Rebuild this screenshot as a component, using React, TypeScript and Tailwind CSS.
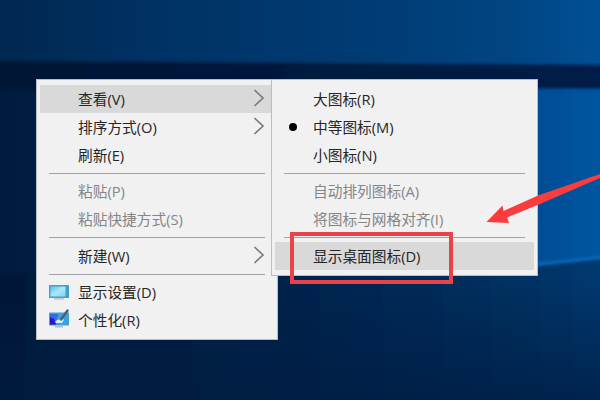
import type { ReactNode } from 'react'

interface MenuItem {
  label?: string
  separator?: boolean
  submenu?: boolean
  disabled?: boolean
  active?: boolean
  checked?: boolean
  icon?: ReactNode
}

function DisplayIcon() {
  return (
    <svg width="20" height="17" viewBox="0 0 20 17" fill="none">
      <defs>
        <linearGradient id="screen" x1="0" y1="0" x2="1" y2="1">
          <stop offset="0" stopColor="#62bce2" />
          <stop offset="0.5" stopColor="#a8e8fa" />
          <stop offset="1" stopColor="#7fd2f0" />
        </linearGradient>
      </defs>
      <rect x="0" y="1" width="20" height="13" rx="0.5" fill="#459fcb" />
      <rect x="1.5" y="2.5" width="15" height="10" fill="url(#screen)" />
      <path d="M5 15h10" stroke="#b4c6d0" strokeWidth="1.4" />
    </svg>
  )
}

function PersonalizeIcon() {
  return (
    <svg className="mb-1" width="20" height="20" viewBox="0 0 20 20" fill="none">
      <rect x="0" y="3.5" width="20" height="13" rx="0.5" fill="#3f9fdc" />
      <path d="M1 5h8l-2 10.5H1z" fill="#2c6fdd" />
      <path d="M1 8l4 2 2 5.5H1z" fill="#3310cf" />
      <path d="M6 13c2-2.5 5-3 9-2.5l-2 3.5H7z" fill="#d5f2fc" />
      <path d="M18.5 1.5L12 10.5" stroke="#47616f" strokeWidth="2.4" strokeLinecap="round" />
      <path d="M6 17.8h8" stroke="#a9b4d6" strokeWidth="1.4" />
    </svg>
  )
}

const mainItems: MenuItem[] = [
  { label: '查看(V)', submenu: true, active: true },
  { label: '排序方式(O)', submenu: true },
  { label: '刷新(E)' },
  { separator: true },
  { label: '粘贴(P)', disabled: true },
  { label: '粘贴快捷方式(S)', disabled: true },
  { separator: true },
  { label: '新建(W)', submenu: true },
  { separator: true },
  { label: '显示设置(D)', icon: <DisplayIcon /> },
  { label: '个性化(R)', icon: <PersonalizeIcon /> },
]

const viewItems: MenuItem[] = [
  { label: '大图标(R)' },
  { label: '中等图标(M)', checked: true },
  { label: '小图标(N)' },
  { separator: true },
  { label: '自动排列图标(A)', disabled: true },
  { label: '将图标与网格对齐(I)', disabled: true },
  { separator: true },
  { label: '显示桌面图标(D)', active: true },
]

function MenuRow({ item }: { item: MenuItem }) {
  return (
    <li
      className={`flex h-7 items-center pr-[9px] ${item.active ? 'bg-[#d9d9d9]' : ''} ${
        item.disabled ? 'text-[#858585]' : 'text-[#262626]'
      }`}
    >
      <span className="flex w-[38px] shrink-0 items-center pl-[9px]">
        {item.icon}
        {item.checked && <span className="ml-[5px] size-2 rounded-full bg-black" />}
      </span>
      <span className="flex-1 pb-px whitespace-nowrap">{item.label}</span>
      {item.submenu && (
        <svg className="mb-0.5" width="12" height="18" viewBox="0 0 12 18" fill="none">
          <path d="M1.5 1l8.5 8-8.5 8" stroke="#7c7c7c" strokeWidth="1.7" />
        </svg>
      )}
    </li>
  )
}

function Menu({ items, className }: { items: MenuItem[]; className: string }) {
  return (
    <ul
      className={`absolute border border-[#b9bec4] bg-[#f1f1f1] px-[3px] pt-[5px] text-[14.7px] leading-[26px] ${className}`}
    >
      {items.map((item, index) =>
        item.separator ? (
          <li key={index} className="flex h-[8.5px] items-center pr-[9px] pl-[9px]">
            <span className="h-px w-full bg-[#a3a3a3]" />
          </li>
        ) : (
          <MenuRow key={index} item={item} />
        )
      )}
    </ul>
  )
}

function Wallpaper() {
  return (
    <svg className="absolute inset-0" width="600" height="400" viewBox="0 0 600 400">
      <defs>
        <linearGradient id="base" x1="0" y1="0" x2="1" y2="0">
          <stop offset="0" stopColor="#001b3f" />
          <stop offset="0.5" stopColor="#002a59" />
          <stop offset="1" stopColor="#003a78" />
        </linearGradient>
        <linearGradient id="top" x1="0" y1="0" x2="1" y2="0">
          <stop offset="0" stopColor="#002850" />
          <stop offset="0.25" stopColor="#003264" />
          <stop offset="0.6" stopColor="#003b73" />
          <stop offset="0.85" stopColor="#004582" />
          <stop offset="1" stopColor="#005096" />
        </linearGradient>
        <linearGradient id="bar" x1="0" y1="0" x2="1" y2="0">
          <stop offset="0" stopColor="#001433" />
          <stop offset="1" stopColor="#001f48" />
        </linearGradient>
        <linearGradient id="pane" x1="0" y1="0" x2="1" y2="0">
          <stop offset="0" stopColor="#004a8e" />
          <stop offset="1" stopColor="#0057a6" />
        </linearGradient>
        <linearGradient id="floor" x1="0" y1="0" x2="1" y2="0">
          <stop offset="0" stopColor="#001837" />
          <stop offset="0.5" stopColor="#00234c" />
          <stop offset="0.85" stopColor="#003162" />
          <stop offset="1" stopColor="#003a72" />
        </linearGradient>
        <linearGradient id="shade" x1="0" y1="0" x2="0" y2="1">
          <stop offset="0" stopColor="#001c42" stopOpacity="0" />
          <stop offset="1" stopColor="#001c42" stopOpacity="0.75" />
        </linearGradient>
        <filter id="soft" filterUnits="userSpaceOnUse" x="-20" y="-20" width="640" height="440">
          <feGaussianBlur stdDeviation="1.8" />
        </filter>
      </defs>
      <rect width="600" height="400" fill="url(#base)" />
      <rect width="600" height="80" fill="url(#top)" />
      <path d="M-10 61L610 65V89H-10z" fill="url(#bar)" filter="url(#soft)" />
      <path d="M500 89H630V262L500 270z" fill="url(#pane)" filter="url(#soft)" />
      <path d="M-10 275H450L610 258V420H-10z" fill="url(#floor)" filter="url(#soft)" />
      <path d="M530 265L610 256" stroke="#0868b8" strokeWidth="3" filter="url(#soft)" />
      <rect y="280" width="600" height="120" fill="url(#shade)" />
    </svg>
  )
}

export default function App() {
  return (
    <main className="relative h-[400px] w-[600px] overflow-hidden font-['Open_Sans','Noto_Sans_CJK_SC',sans-serif]">
      <Wallpaper />
      <Menu items={mainItems} className="top-[79px] left-[36px] h-[261px] w-[242px]" />
      <Menu items={viewItems} className="top-[79px] left-[271px] h-[197px] w-[267px]" />

      {/* Highlight box and pointer */}
      <div className="absolute top-[232px] left-[290px] h-[52px] w-[163px] border-4 border-[#e9434a]" />
      <svg className="absolute top-[170px] left-[480px]" width="120" height="60" viewBox="0 0 120 60">
        <path d="M6.5 52L22.5 35.5l1 5.5L58 25.5 120 4v4L60 34 27 47.5l2 5.5z" fill="#fb3c3c" />
      </svg>
    </main>
  )
}
